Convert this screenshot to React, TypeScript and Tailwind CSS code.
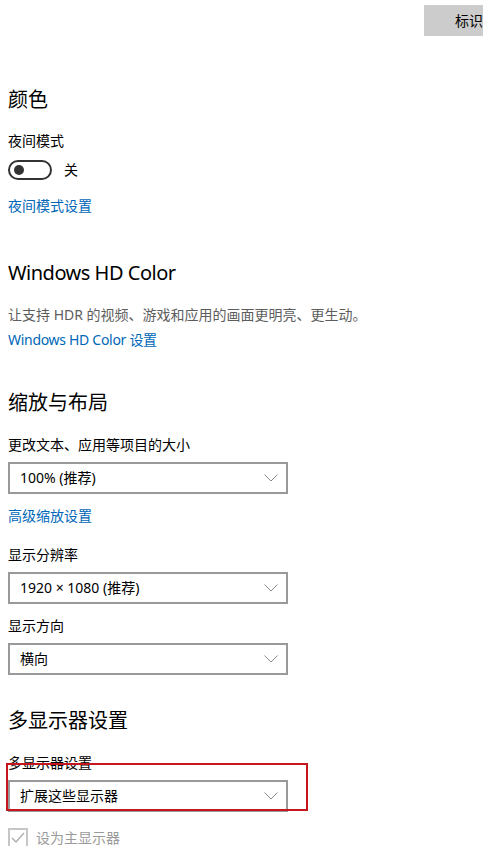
const font = { fontFamily: '"Noto Sans", "Noto Sans CJK SC", sans-serif' };

function Select({ value }: { value: string }) {
  return (
    <div className="flex h-[32px] w-[280px] items-center justify-between border-2 border-[#999999] bg-white pl-[10px] pr-[8px] text-[14px] text-black">
      <span className="leading-[20px]">{value}</span>
      <svg width="14" height="8" viewBox="0 0 14 8" fill="none">
        <path d="M0.5 0.5 L7 7 L13.5 0.5" stroke="#8a8a8a" strokeWidth="1" />
      </svg>
    </div>
  );
}

function Heading({ children, className = "" }: { children: React.ReactNode; className?: string }) {
  return <h2 className={`text-[20px] font-normal leading-[28px] text-black ${className}`}>{children}</h2>;
}

function Label({ children, className = "" }: { children: React.ReactNode; className?: string }) {
  return <div className={`text-[14px] leading-[20px] text-black ${className}`}>{children}</div>;
}

function Link({ children, className = "" }: { children: React.ReactNode; className?: string }) {
  return <a className={`block text-[14px] leading-[20px] text-[#0067b8] ${className}`}>{children}</a>;
}

export default function App() {
  return (
    <div className="relative h-[846px] w-[483px] overflow-hidden bg-white" style={font}>
      <div className="flex justify-end pt-[5px]">
        <button className="flex h-[31px] w-[80px] shrink-0 translate-x-[21px] items-center bg-[#cccccc] pl-[31px] text-[14px] text-black">
          标识
        </button>
      </div>

      <div className="flex flex-col items-start pl-[8px]">
        <Heading className="mt-[50px]">颜色</Heading>
        <Label className="mt-[17px]">夜间模式</Label>
        <div className="mt-[9px] flex items-center gap-[12px]">
          <div className="flex h-[20px] w-[44px] items-center rounded-full border-2 border-[#333333] pl-[4px]">
            <div className="h-[10px] w-[10px] rounded-full bg-[#333333]" />
          </div>
          <span className="text-[14px] leading-[20px] text-black">关</span>
        </div>
        <Link className="mt-[16px]">夜间模式设置</Link>

        <Heading className="mt-[43px] tracking-[-0.5px]">Windows HD Color</Heading>
        <div className="mt-[18px] text-[14px] leading-[20px] text-[#5d5d5d]">
          让支持 HDR 的视频、游戏和应用的画面更明亮、更生动。
        </div>
        <Link className="mt-[5px] tracking-[-0.3px]">Windows HD Color 设置</Link>

        <Heading className="mt-[39px]">缩放与布局</Heading>
        <Label className="mt-[18px]">更改文本、应用等项目的大小</Label>
        <div className="mt-[7px]">
          <Select value="100% (推荐)" />
        </div>
        <Link className="mt-[12px]">高级缩放设置</Link>

        <Label className="mt-[19px]">显示分辨率</Label>
        <div className="mt-[7px]">
          <Select value="1920 × 1080 (推荐)" />
        </div>
        <Label className="mt-[12px]">显示方向</Label>
        <div className="mt-[7px]">
          <Select value="横向" />
        </div>

        <Heading className="mt-[32px]">多显示器设置</Heading>
        <Label className="mt-[18px]">多显示器设置</Label>
        <div className="mt-[7px]">
          <Select value="扩展这些显示器" />
        </div>
        <div className="mt-[16px] flex items-center gap-[8px]">
          <div className="flex h-[20px] w-[20px] items-center justify-center border-2 border-[#c6c6c6]">
            <svg width="14" height="12" viewBox="0 0 14 12" fill="none">
              <path d="M1 6 L5 10 L13 1" stroke="#b0b0b0" strokeWidth="1.5" />
            </svg>
          </div>
          <span className="text-[14px] leading-[20px] text-[#9a9a9a]">设为主显示器</span>
        </div>
      </div>

      <div className="pointer-events-none absolute left-[6px] top-[763px] h-[48px] w-[302px] border-2 border-[#c4161c]" />
    </div>
  );
}
